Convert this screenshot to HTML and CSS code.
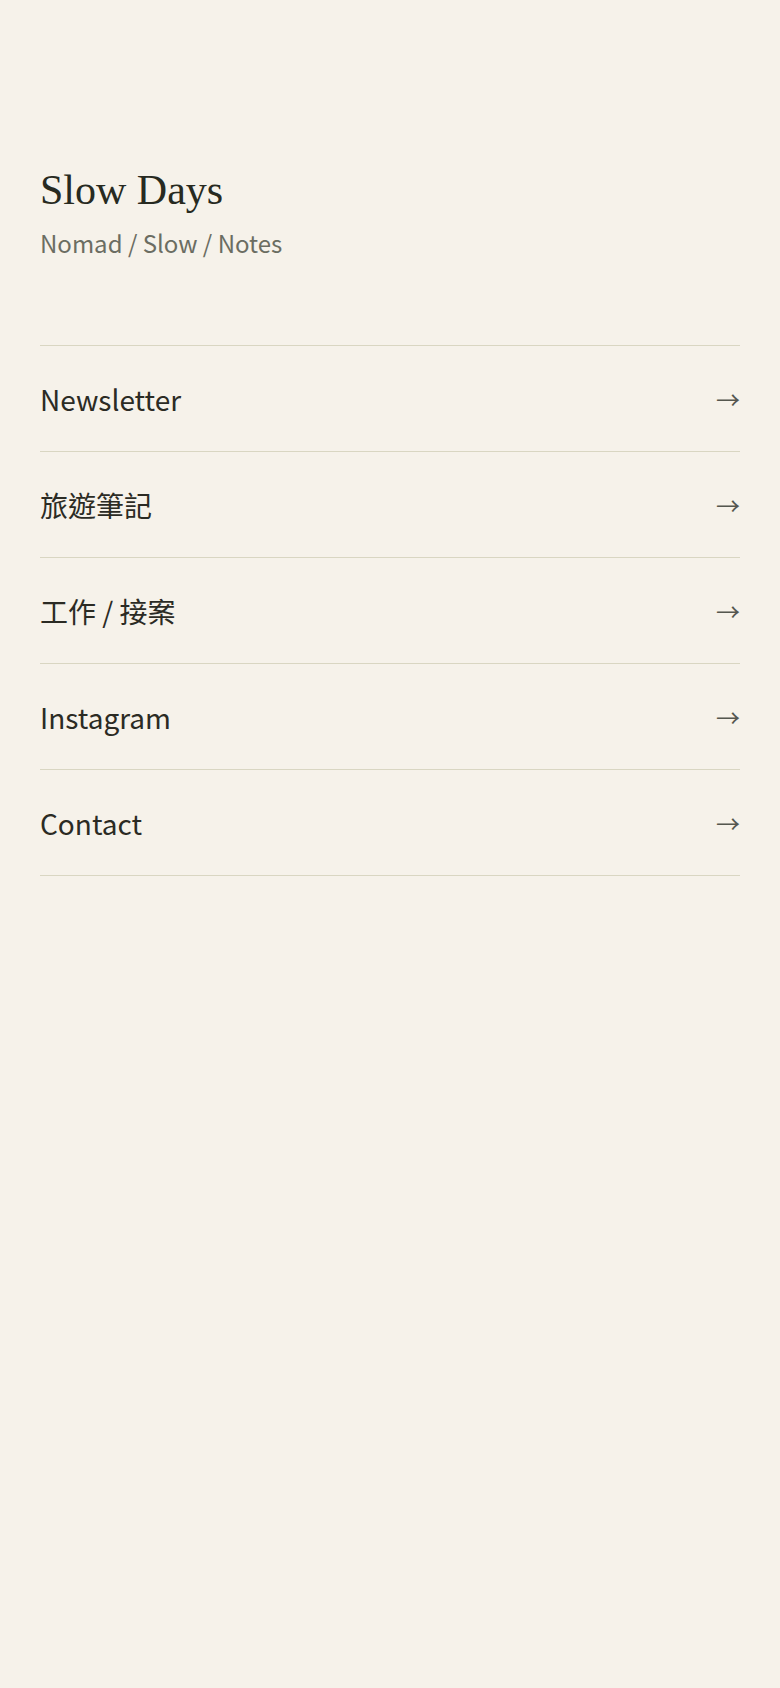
FILE: index.html
```html
<!DOCTYPE html>
<html lang="zh-Hant">
<head>
<meta charset="utf-8">
<title>Slow Days</title>
<link rel="stylesheet" href="styles.css">
</head>
<body>
<main class="page">
  <header class="brand">
    <h1 class="title">Slow Days</h1>
    <p class="subtitle">Nomad / Slow / Notes</p>
  </header>
  <nav class="menu">
    <a class="item" href="#"><span class="label">Newsletter</span><span class="arrow">→</span></a>
    <a class="item" href="#"><span class="label">旅遊筆記</span><span class="arrow">→</span></a>
    <a class="item" href="#"><span class="label">工作 / 接案</span><span class="arrow">→</span></a>
    <a class="item" href="#"><span class="label">Instagram</span><span class="arrow">→</span></a>
    <a class="item" href="#"><span class="label">Contact</span><span class="arrow">→</span></a>
  </nav>
</main>
</body>
</html>
```
FILE: styles.css
```css
html, body {
  margin: 0;
  padding: 0;
  background: #f6f2ea;
}
body {
  font-family: "Noto Sans CJK TC", "Noto Sans", sans-serif;
  color: #2b2b24;
  min-height: 1688px;
}
.page {
  padding: 164px 40px 40px;
}
.brand {
  margin-bottom: 85px;
}
.title {
  margin: 0;
  font-family: "Liberation Serif", "DejaVu Serif", serif;
  font-weight: 400;
  font-size: 42px;
  line-height: 52px;
  color: #272a21;
}
.subtitle {
  margin: 10px 0 0;
  font-size: 24px;
  line-height: 34px;
  color: #6b6d62;
}
.menu {
  border-top: 1.5px solid #d9d6c2;
}
.item {
  display: flex;
  align-items: center;
  justify-content: space-between;
  height: 105px;
  border-bottom: 1.5px solid #d9d6c2;
  text-decoration: none;
  color: #2b2b24;
}
.label {
  font-size: 28px;
}
.arrow {
  font-size: 24px;
  color: #55574f;
}
```
